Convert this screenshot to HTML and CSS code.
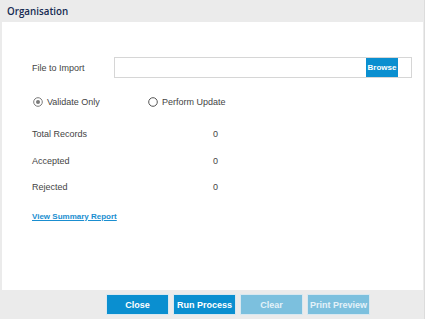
FILE: index.html
```html
<!DOCTYPE html>
<html>
<head>
<meta charset="utf-8">
<link rel="stylesheet" href="styles.css">
</head>
<body>
<div class="dialog">
  <div class="header"><span class="title">Organisation</span></div>
  <div class="content">
    <div class="file-row">
      <span class="label">File to Import</span>
      <div class="file-input">
        <span class="browse">Browse</span>
      </div>
    </div>
    <div class="radio-row">
      <label class="radio">
        <svg width="10" height="10" viewBox="0 0 10 10"><circle cx="5" cy="5" r="4.3" fill="#fff" stroke="#7a7a7a" stroke-width="1"/><circle cx="5" cy="5" r="2" fill="#7a7a7a"/></svg>
        <span>Validate Only</span>
      </label>
      <label class="radio">
        <svg width="10" height="10" viewBox="0 0 10 10"><circle cx="5" cy="5" r="4.3" fill="#fff" stroke="#555" stroke-width="1"/></svg>
        <span>Perform Update</span>
      </label>
    </div>
    <div class="stats">
      <div class="stat"><span class="label">Total Records</span><span class="value">0</span></div>
      <div class="stat"><span class="label">Accepted</span><span class="value">0</span></div>
      <div class="stat"><span class="label">Rejected</span><span class="value">0</span></div>
    </div>
    <a class="report" href="#">View Summary Report</a>
  </div>
  <div class="footer">
    <button class="btn">Close</button>
    <button class="btn">Run Process</button>
    <button class="btn disabled">Clear</button>
    <button class="btn disabled">Print Preview</button>
  </div>
</div>
</body>
</html>
```

FILE: styles.css
```css
* { box-sizing: border-box; }
html, body { margin: 0; padding: 0; }
body {
  width: 425px;
  height: 319px;
  overflow: hidden;
  font-family: "Liberation Sans", Arial, sans-serif;
  font-size: 9px;
  color: #444;
}
.dialog {
  width: 425px;
  height: 319px;
  background: #ebebeb;
  display: flex;
  flex-direction: column;
  border-right: 1px solid #dcdcdc;
}
.header {
  height: 22px;
  flex: none;
  display: flex;
  align-items: center;
  padding-left: 7px;
}
.title {
  font-family: "Open Sans", "Noto Sans", sans-serif;
  font-weight: 600;
  font-size: 9.8px;
  color: #152a52;
}
.content {
  flex: 1;
  background: #fff;
  margin: 0 1px 0 2px;
  padding: 35px 0 0 30px;
  display: flex;
  flex-direction: column;
}
.file-row {
  display: flex;
  align-items: center;
  height: 21px;
}
.file-row .label { width: 82px; }
.file-input {
  width: 298px;
  height: 21px;
  border: 1px solid #d6d6d6;
  display: flex;
  justify-content: flex-end;
  align-items: center;
  padding-right: 13px;
}
.browse {
  background: #0a8fd0;
  color: #fff;
  font-weight: bold;
  font-size: 8px;
  width: 32px;
  height: 19px;
  display: flex;
  align-items: center;
  justify-content: center;
}
.radio-row {
  display: flex;
  align-items: center;
  height: 14px;
  margin-top: 17px;
  padding-left: 1px;
}
.radio {
  display: flex;
  align-items: center;
  gap: 4px;
}
.radio:first-child { width: 115px; }
.radio svg { display: block; }
.stats {
  margin-top: 12px;
  display: flex;
  flex-direction: column;
}
.stat {
  display: flex;
  align-items: center;
  height: 26.5px;
}
.stat .label { width: 181px; }
.report {
  margin-top: 11px;
  color: #1a8ed0;
  font-weight: bold;
  font-size: 8px;
  text-decoration: underline;
  align-self: flex-start;
}
.footer {
  height: 29px;
  flex: none;
  display: flex;
  align-items: center;
  gap: 4px;
  padding-left: 106px;
}
.btn {
  width: 63px;
  height: 21px;
  border: 1px solid #d8e8f0;
  background: #0a8fd0;
  color: #fff;
  font-family: "Liberation Sans", Arial, sans-serif;
  font-weight: bold;
  font-size: 9px;
  padding: 0;
}
.btn.disabled {
  background: #7cc0de;
  color: #e4f2f9;
}
```
